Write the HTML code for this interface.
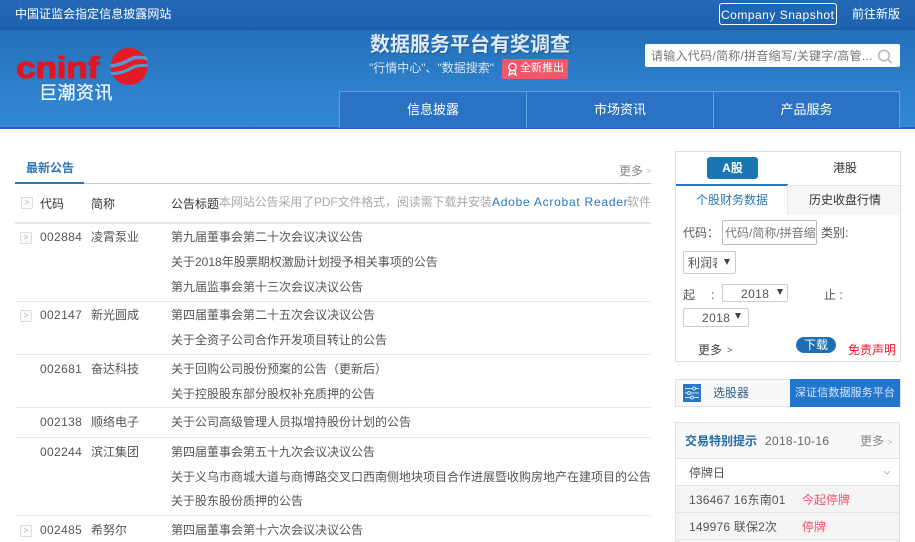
<!DOCTYPE html>
<html lang="zh"><head><meta charset="utf-8"><title>巨潮资讯</title>
<style>
*{box-sizing:border-box}
html,body{margin:0;padding:0;width:915px;height:542px;overflow:hidden;background:#fff}
body{position:relative;font-family:"Liberation Sans","Noto Sans CJK SC",sans-serif;font-size:12px;color:#555}
.t{position:absolute;white-space:nowrap;line-height:16px;height:16px}
.b{position:absolute}
.hl{position:absolute;left:15px;width:636px;height:1px;background:#e8e8e8}
.ic{position:absolute;width:12px;height:12px;border:1px solid #ddd;border-radius:1px;background:#fafafa;color:#aaa;font-size:8px;line-height:10px;text-align:center}
.n{letter-spacing:.35px}
.nav{position:absolute;top:91px;height:37px;border-left:1px solid #5da2e0;border-top:1px solid #5da2e0;background:#2b72c4;color:#fff;font-size:13px;line-height:36px;text-align:center}
.sel{position:absolute;border:1px solid #ccc;border-radius:2px;background:#fff;color:#555;font-size:12px}
.sel i{position:absolute;width:0;height:0;border-left:3.5px solid transparent;border-right:3.5px solid transparent;border-top:6px solid #444}
</style></head><body>

<div class="b" style="left:0;top:0;width:915px;height:29px;background:linear-gradient(#2268b4,#1e62af)"></div>
<div class="b" style="left:0;top:29px;width:915px;height:99px;background:linear-gradient(#2470ba,#348ad5)"></div>
<div class="b" style="left:0;top:29px;width:915px;height:1px;background:#1c5ca3"></div>
<div class="b" style="left:0;top:127px;width:915px;height:2px;background:#1e66b4"></div>

<div class="t" style="left:15px;top:6px;color:#fff;font-size:12px;letter-spacing:.03px">中国证监会指定信息披露网站</div>
<div class="b" style="left:719px;top:3px;width:118px;height:22px;border:1px solid #fff;border-radius:3px"></div>
<div class="t" style="left:721px;top:7px;color:#fff;font-size:12px;letter-spacing:.5px">Company Snapshot</div>
<div class="t" style="left:852px;top:6px;color:#fff;font-size:12px">前往新版</div>

<div class="t" style="left:16px;top:51px;height:34px;line-height:34px;font-family:'Liberation Sans',sans-serif;font-weight:bold;font-size:31px;color:#e3141f;-webkit-text-stroke:.9px #e3141f;letter-spacing:-.4px;transform-origin:0 50%;transform:scaleX(1.15)">cninf</div>
<svg class="b" style="left:110px;top:47px" width="38" height="39" viewBox="0 0 38 39">
<circle cx="19" cy="19.500" r="18.500" fill="#e51a24"/>
<path d="M0 17.500C8 16 13 14.500 18 11.500C24 8 31 8 37 10L38 13.500C31 11.500 25 11.500 20 14.500C14 18 8 20 1 20.500Z" fill="#5a97d2"/>
<path d="M0 25C8 25 14 23.500 19 20.500C25 17 31 16.500 38 17.500L37.500 20C31 19.500 26 20 21 23C15 26.500 9 28 2 28Z" fill="#5a97d2"/>
</svg>
<div class="t" style="left:39px;top:83px;height:20px;line-height:20px;color:#eef4fa;font-size:18px;letter-spacing:.5px;-webkit-text-stroke:.3px #eef4fa">巨潮资讯</div>

<div class="t" style="left:370px;top:33px;height:24px;line-height:24px;color:#dfe9f3;font-size:20px;font-weight:bold;text-shadow:1px 1px 1px rgba(20,60,110,.5)">数据服务平台有奖调查</div>
<div class="t" style="left:369px;top:60px;color:#d6e4f1;font-size:12px">"行情中心"、"数据搜索"</div>
<div class="b" style="left:502px;top:59px;width:66px;height:20px;background:#f4566b;transform:skewX(-2deg)"></div>
<svg class="b" style="left:507px;top:62px" width="11" height="14" viewBox="0 0 11 14" fill="none" stroke="#fff" stroke-width="1.300"><circle cx="5.500" cy="5" r="3.700"/><path d="M3 8.500L2 13L5.500 11L9 13L8 8.500"/></svg>
<div class="t" style="left:520px;top:60px;color:#fff;font-size:11px">全新推出</div>

<div class="b" style="left:645px;top:44px;width:255px;height:23px;background:#fff;border-radius:2px"></div>
<div class="t" style="left:651px;top:48px;color:#777;font-size:12px;letter-spacing:.27px">请输入代码/简称/拼音缩写/关键字/高管...</div>
<svg class="b" style="left:877px;top:49px" width="16" height="15" viewBox="0 0 16 15" fill="none" stroke="#bbb" stroke-width="1.600"><circle cx="7" cy="6.500" r="5.300"/><path d="M11 10.500L14.500 14"/></svg>

<div class="nav" style="left:339px;width:187px">信息披露</div>
<div class="nav" style="left:526px;width:187px">市场资讯</div>
<div class="nav" style="left:713px;width:187px;border-right:1px solid #5da2e0">产品服务</div>

<!-- left -->
<div class="t" style="left:26px;top:160px;color:#2a76b8;font-size:12px;font-weight:bold">最新公告</div>
<div class="b" style="left:15px;top:183px;width:636px;height:1px;background:#b4cfe2"></div>
<div class="b" style="left:15px;top:182px;width:69px;height:2px;background:#2a76b8"></div>
<div class="t" style="left:619px;top:163px;color:#888">更多</div>
<div class="t" style="left:646px;top:163px;color:#bbb;font-size:9px">&gt;</div>

<div class="ic" style="left:21px;top:197px">&gt;</div>
<div class="t" style="left:40px;top:196px;color:#333">代码</div>
<div class="t" style="left:91px;top:196px;color:#333">简称</div>
<div class="t" style="left:171px;top:196px;color:#333">公告标题</div>
<div class="t" style="left:219px;top:194px;color:#aaa;letter-spacing:-.13px">本网站公告采用了PDF文件格式，阅读需下载并安装</div>
<div class="t" style="left:492px;top:194px;color:#2a76c4;letter-spacing:.75px">Adobe Acrobat Reader</div>
<div class="t" style="left:627px;top:194px;color:#aaa">软件</div>
<div class="b" style="left:15px;top:222px;width:636px;height:2px;background:#e6e6e6"></div>

<div class="ic" style="left:20px;top:232px">&gt;</div>
<div class="t n" style="left:40px;top:229px">002884</div><div class="t" style="left:91px;top:229px">凌霄泵业</div>
<div class="t" style="left:171px;top:229px">第九届董事会第二十次会议决议公告</div>
<div class="t" style="left:171px;top:254px">关于2018年股票期权激励计划授予相关事项的公告</div>
<div class="t" style="left:171px;top:279px">第九届监事会第十三次会议决议公告</div>
<div class="hl" style="top:301px"></div>

<div class="ic" style="left:20px;top:310px">&gt;</div>
<div class="t n" style="left:40px;top:307px">002147</div><div class="t" style="left:91px;top:307px">新光圆成</div>
<div class="t" style="left:171px;top:307px">第四届董事会第二十五次会议决议公告</div>
<div class="t" style="left:171px;top:332px">关于全资子公司合作开发项目转让的公告</div>
<div class="hl" style="top:354px"></div>

<div class="t n" style="left:40px;top:361px">002681</div><div class="t" style="left:91px;top:361px">奋达科技</div>
<div class="t" style="left:171px;top:361px">关于回购公司股份预案的公告（更新后）</div>
<div class="t" style="left:171px;top:386px">关于控股股东部分股权补充质押的公告</div>
<div class="hl" style="top:407px"></div>

<div class="t n" style="left:40px;top:414px">002138</div><div class="t" style="left:91px;top:414px">顺络电子</div>
<div class="t" style="left:171px;top:414px">关于公司高级管理人员拟增持股份计划的公告</div>
<div class="hl" style="top:437px"></div>

<div class="t n" style="left:40px;top:444px">002244</div><div class="t" style="left:91px;top:444px">滨江集团</div>
<div class="t" style="left:171px;top:444px">第四届董事会第五十九次会议决议公告</div>
<div class="t" style="left:171px;top:469px">关于义乌市商城大道与商博路交叉口西南侧地块项目合作进展暨收购房地产在建项目的公告</div>
<div class="t" style="left:171px;top:493px">关于股东股份质押的公告</div>
<div class="hl" style="top:515px"></div>

<div class="ic" style="left:20px;top:525px">&gt;</div>
<div class="t n" style="left:40px;top:522px">002485</div><div class="t" style="left:91px;top:522px">希努尔</div>
<div class="t" style="left:171px;top:522px">第四届董事会第十六次会议决议公告</div>

<!-- right panel -->
<div class="b" style="left:675px;top:151px;width:226px;height:211px;border:1px solid #ddd"></div>
<div class="b" style="left:707px;top:157px;width:51px;height:22px;background:#1a75b5;border-radius:3px;color:#fff;font-weight:bold;font-size:12px;line-height:22px;text-align:center">A股</div>
<div class="t" style="left:833px;top:160px;color:#333">港股</div>
<div class="b" style="left:676px;top:184px;width:112px;height:2px;background:#2a76b8"></div>
<div class="b" style="left:787px;top:185px;width:113px;height:30px;background:#f6f6f6;border-top:1px solid #e6e6e6;border-left:1px solid #e6e6e6"></div>
<div class="t" style="left:696px;top:192px;color:#2a76b8">个股财务数据</div>
<div class="t" style="left:809px;top:192px;color:#333">历史收盘行情</div>

<div class="t" style="left:683px;top:225px">代码：</div>
<div class="b" style="left:722px;top:220px;width:95px;height:25px;border:1px solid #bbb;border-radius:2px;overflow:hidden"><div class="t" style="left:2px;top:4px;color:#777;width:90px;overflow:hidden">代码/简称/拼音缩写</div></div>
<div class="t" style="left:821px;top:225px">类别:</div>
<div class="sel" style="left:683px;top:251px;width:53px;height:23px"><div class="t" style="left:4px;top:3px;width:29px;overflow:hidden">利润表</div><i style="left:40px;top:7px"></i></div>

<div class="t" style="left:683px;top:287px">起</div><div class="t" style="left:711px;top:287px">:</div>
<div class="sel" style="left:722px;top:284px;width:66px;height:18px"><div class="t" style="left:18px;top:1px;letter-spacing:.4px">2018</div><i style="left:54px;top:4px"></i></div>
<div class="t" style="left:824px;top:287px">止 :</div>
<div class="sel" style="left:683px;top:308px;width:66px;height:19px"><div class="t" style="left:18px;top:1px;letter-spacing:.4px">2018</div><i style="left:51px;top:4px"></i></div>

<div class="t" style="left:698px;top:342px;color:#444">更多</div><div class="t" style="left:727px;top:342px;color:#444;font-size:9px">&gt;</div>
<div class="b" style="left:796px;top:337px;width:40px;height:16px;background:#1f6fb2;border-radius:8px;color:#fff;line-height:17px;text-align:center">下载</div>
<div class="t" style="left:848px;top:342px;color:#f0142d">免责声明</div>

<div class="b" style="left:675px;top:379px;width:226px;height:28px;border:1px solid #e2e2e2;background:#f8f8f8"></div>
<svg class="b" style="left:683px;top:384px" width="18" height="18" viewBox="0 0 18 18">
<rect width="18" height="18" fill="#2a76c8"/>
<g stroke="#cfe2f5" stroke-width="1" fill="#2a76c8"><path d="M2 4.500H16M2 9H16M2 13.500H16"/><circle cx="11" cy="4.500" r="1.500"/><circle cx="6" cy="9" r="1.500"/><circle cx="9" cy="13.500" r="1.500"/></g>
</svg>
<div class="t" style="left:713px;top:385px;color:#2d5f8e">选股器</div>
<div class="b" style="left:790px;top:379px;width:110px;height:28px;background:#2376ce;color:#d5e6f6;line-height:28px;font-size:11px;letter-spacing:.1px;text-align:center;white-space:nowrap">深证信数据服务平台</div>

<div class="b" style="left:675px;top:422px;width:225px;height:120px;border:1px solid #e2e2e2;border-bottom:0;background:#f8f8f8"></div>
<div class="t" style="left:685px;top:433px;color:#2469a5;font-weight:bold">交易特别提示</div>
<div class="t" style="left:765px;top:433px;color:#666;letter-spacing:.3px">2018-10-16</div>
<div class="t" style="left:860px;top:433px;color:#888">更多</div><div class="t" style="left:887px;top:434px;color:#bbb;font-size:9px">&gt;</div>
<div class="b" style="left:676px;top:458px;width:223px;height:1px;background:#e2e2e2"></div>
<div class="b" style="left:676px;top:459px;width:223px;height:27px;background:#fff;border-bottom:1px solid #e2e2e2"></div>
<div class="t" style="left:689px;top:465px;color:#555">停牌日</div>
<svg class="b" style="left:883px;top:470px" width="8" height="5" viewBox="0 0 8 5" fill="none" stroke="#bbb"><path d="M1 1L4 4L7 1"/></svg>
<div class="b" style="left:676px;top:486px;width:223px;height:56px;background:#f4f4f4"></div>
<div class="t" style="left:689px;top:492px;color:#555;letter-spacing:.2px">136467 16东南01</div>
<div class="t" style="left:802px;top:492px;color:#f2536a">今起停牌</div>
<div class="b" style="left:676px;top:512px;width:223px;height:1px;background:#e4e4e4"></div>
<div class="t" style="left:689px;top:519px;color:#555;letter-spacing:.2px">149976 联保2次</div>
<div class="t" style="left:802px;top:519px;color:#f2536a">停牌</div>
<div class="b" style="left:676px;top:539px;width:223px;height:1px;background:#e4e4e4"></div>
</body></html>
